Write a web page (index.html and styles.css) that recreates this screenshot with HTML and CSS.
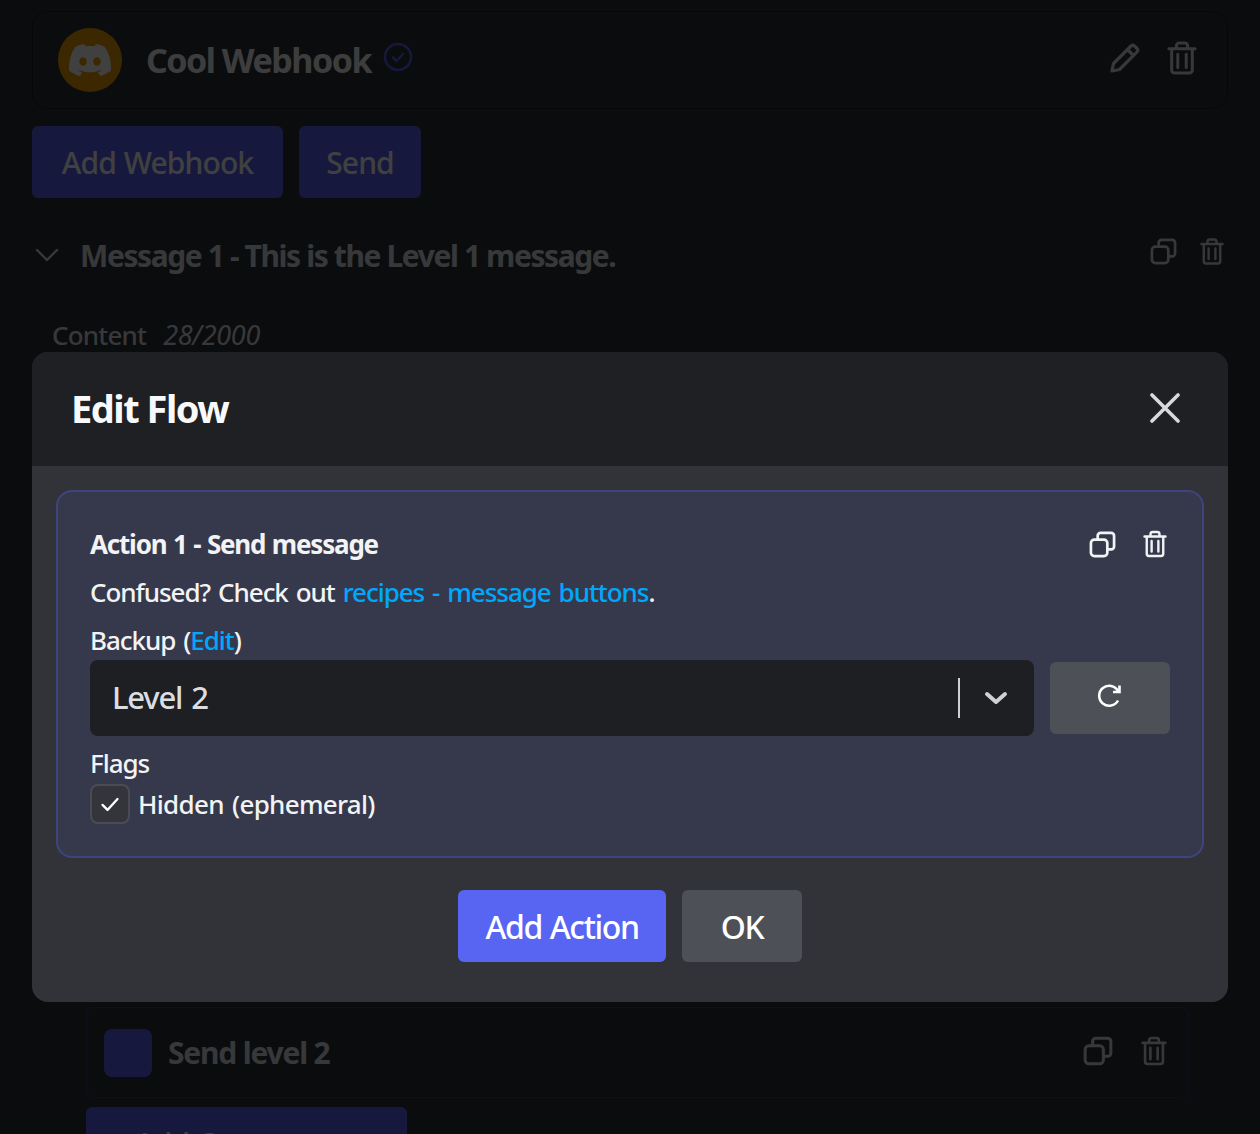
FILE: index.html
```html
<!DOCTYPE html>
<html lang="en">
<head>
<meta charset="UTF-8">
<title>Edit Flow</title>
<link rel="stylesheet" href="styles.css">
</head>
<body>
<svg class="defs" width="0" height="0">
    <symbol id="i-trash" viewBox="0 0 32 36">
        <path d="M2 8h28M10 8V5a3 3 0 0 1 3-3h6a3 3 0 0 1 3 3v3M5 8v23a3 3 0 0 0 3 3h16a3 3 0 0 0 3-3V8M11.500 14v14M20.500 14v14" fill="none" stroke="currentColor" stroke-width="3.200" stroke-linecap="round" stroke-linejoin="round"/>
    </symbol>
    <symbol id="i-copy" viewBox="0 0 28 28">
        <path d="M9 9V5a3 3 0 0 1 3-3h11a3 3 0 0 1 3 3v11a3 3 0 0 1-3 3h-4" fill="none" stroke="currentColor" stroke-width="2.800" stroke-linecap="round"/>
        <rect x="2" y="9" width="17" height="17" rx="3.500" fill="none" stroke="currentColor" stroke-width="2.800"/>
    </symbol>
</svg>

<div class="page">
    <div class="webhook-card">
        <div class="avatar">
            <svg width="42" height="42" viewBox="0 0 24 24"><path fill="#fff" d="M20.317 4.3698a19.7913 19.7913 0 00-4.8851-1.5152.0741.0741 0 00-.0785.0371c-.211.3753-.4447.8648-.6083 1.2495-1.8447-.2762-3.68-.2762-5.4868 0-.1636-.3933-.4058-.8742-.6177-1.2495a.077.077 0 00-.0785-.037 19.7363 19.7363 0 00-4.8852 1.515.0699.0699 0 00-.0321.0277C.5334 9.0458-.319 13.5799.0992 18.0578a.0824.0824 0 00.0312.0561c2.0528 1.5076 4.0413 2.4228 5.9929 3.0294a.0777.0777 0 00.0842-.0276c.4616-.6304.8731-1.2952 1.226-1.9942a.076.076 0 00-.0416-.1057c-.6528-.2476-1.2743-.5495-1.8722-.8923a.077.077 0 01-.0076-.1277c.1258-.0943.2517-.1923.3718-.2914a.0743.0743 0 01.0776-.0105c3.9278 1.7933 8.18 1.7933 12.0614 0a.0739.0739 0 01.0785.0095c.1202.099.246.1981.3728.2924a.077.077 0 01-.0066.1276 12.2986 12.2986 0 01-1.873.8914.0766.0766 0 00-.0407.1067c.3604.698.7719 1.3628 1.225 1.9932a.076.076 0 00.0842.0286c1.961-.6067 3.9495-1.5219 6.0023-3.0294a.077.077 0 00.0313-.0552c.5004-5.177-.8382-9.6739-3.5485-13.6604a.061.061 0 00-.0312-.0286zM8.02 15.3312c-1.1825 0-2.1569-1.0857-2.1569-2.419 0-1.3332.9555-2.4189 2.157-2.4189 1.2108 0 2.1757 1.0952 2.1568 2.419 0 1.3332-.9555 2.4189-2.1569 2.4189zm7.9748 0c-1.1825 0-2.1569-1.0857-2.1569-2.419 0-1.3332.9554-2.4189 2.1569-2.4189 1.2108 0 2.1757 1.0952 2.1568 2.419 0 1.3332-.946 2.4189-2.1568 2.4189Z"/></svg>
        </div>
        <span class="webhook-name">Cool Webhook</span>
        <svg class="verified" width="30" height="30" viewBox="0 0 30 30"><circle cx="15" cy="15" r="13" fill="none" stroke="#5865f2" stroke-width="2.500"/><path d="M10 15.500l3.500 3.500 6.500-7" fill="none" stroke="#5865f2" stroke-width="2.500" stroke-linecap="round" stroke-linejoin="round"/></svg>
        <div class="row-icons wide head-icons">
            <svg width="32" height="32" viewBox="0 0 32 32"><path d="M3 29l1.500-7.500L22 4a2.500 2.500 0 0 1 3.500 0L28 6.500a2.500 2.500 0 0 1 0 3.500L10.500 27.500zM18.500 7.500l6 6" fill="none" stroke="currentColor" stroke-width="3.200" stroke-linejoin="round"/></svg>
            <svg width="30" height="34"><use href="#i-trash"/></svg>
        </div>
    </div>

    <div class="button-row">
        <button class="btn primary btn-add">Add Webhook</button>
        <button class="btn primary btn-send">Send</button>
    </div>

    <div class="message-head">
        <svg width="24" height="14" viewBox="0 0 24 14"><path d="M2 2l10 10L22 2" fill="none" stroke="currentColor" stroke-width="2.400" stroke-linecap="round" stroke-linejoin="round"/></svg>
        <span class="message-title">Message 1 - This is the Level 1 message.</span>
        <div class="row-icons message-icons">
            <svg width="27" height="27"><use href="#i-copy"/></svg>
            <svg width="24" height="27"><use href="#i-trash"/></svg>
        </div>
    </div>

    <div class="message-body">
        <div class="field-label">Content <em>28/2000</em></div>
        <div class="nested">
            <div class="component">
                <span class="swatch"></span>
                <span class="component-name">Send level 2</span>
                <div class="row-icons wide component-icons">
                    <svg width="30" height="30"><use href="#i-copy"/></svg>
                    <svg width="26" height="30"><use href="#i-trash"/></svg>
                </div>
            </div>
            <button class="btn primary add-component">Add Component</button>
        </div>
    </div>
</div>

<div class="overlay">
    <div class="modal">
        <div class="modal-head">
            <h1>Edit Flow</h1>
            <svg width="30" height="30" viewBox="0 0 30 30"><path d="M2 2l26 26M28 2L2 28" fill="none" stroke="#d8d9db" stroke-width="3.600" stroke-linecap="round"/></svg>
        </div>
        <div class="modal-body">
            <div class="action-card">
                <div class="action-head">
                    <strong>Action 1 - Send message</strong>
                    <div class="row-icons action-icons">
                        <svg width="27" height="27"><use href="#i-copy"/></svg>
                        <svg width="24" height="28"><use href="#i-trash"/></svg>
                    </div>
                </div>
                <p>Confused? Check out <a href="#">recipes - message buttons</a>.</p>
                <p>Backup (<a href="#">Edit</a>)</p>
                <div class="select-row">
                    <div class="select">
                        <span class="select-value">Level 2</span>
                        <span class="select-sep"></span>
                        <svg width="24" height="14" viewBox="0 0 24 14"><path d="M3 3l9 8 9-8" fill="none" stroke="#cfd0d2" stroke-width="4" stroke-linecap="round" stroke-linejoin="round"/></svg>
                    </div>
                    <button class="btn secondary refresh">
                        <svg width="26" height="26" viewBox="0 0 26 26"><path d="M21 16.500A10 10 0 1 1 21 7M22.500 1.500V8H16" fill="none" stroke="#fff" stroke-width="2.600"/></svg>
                    </button>
                </div>
                <p class="flags-label">Flags</p>
                <label class="check-row">
                    <span class="checkbox">
                        <svg width="20" height="15" viewBox="0 0 22 18"><path d="M2 9.500l6 6L20 2.500" fill="none" stroke="#fff" stroke-width="2.800" stroke-linecap="round" stroke-linejoin="round"/></svg>
                    </span>
                    <span class="check-text">Hidden (ephemeral)</span>
                </label>
            </div>
            <div class="modal-actions">
                <button class="btn primary btn-action">Add Action</button>
                <button class="btn secondary ok">OK</button>
            </div>
        </div>
    </div>
</div>
</body>
</html>
```

FILE: styles.css
```css
* {
    box-sizing: border-box;
}

html, body {
    height: 1134px;
    overflow: hidden;
}

body {
    margin: 0;
    font-family: "Noto Sans", sans-serif;
    background-color: #2e3138;
    color: #dbdee1;
    position: relative;
}

.defs {
    position: absolute;
}

.page {
    padding: 11px 32px 0;
}

.webhook-card {
    display: flex;
    align-items: center;
    height: 98px;
    padding: 0 30px 0 25px;
    border: 1px solid #1e1f22;
    border-radius: 16px;
}

.avatar {
    width: 64px;
    height: 64px;
    border-radius: 50%;
    background-color: #f0a000;
    color: #fff;
    display: flex;
    align-items: center;
    justify-content: center;
}

.webhook-name {
    margin-left: 24px;
    font-size: 34px;
    font-weight: 700;
    letter-spacing: -1.5px;
    color: #f2f3f5;
}

.verified {
    margin: 0 0 6px 12px;
}

.row-icons {
    margin-left: auto;
    display: flex;
    align-items: center;
    gap: 24px;
}

.row-icons.wide {
    gap: 26px;
}

.head-icons {
    margin-bottom: 4px;
}

.message-icons {
    margin: 0 2px 8px auto;
    gap: 23px;
}

.row-icons.component-icons {
    margin-bottom: 4px;
    margin-right: 1px;
    gap: 28px;
}

.btn {
    font-family: inherit;
    font-size: 30px;
    font-weight: 500;
    height: 72px;
    border: none;
    border-radius: 6px;
    color: #fff;
    padding: 0;
    letter-spacing: -0.9px;
    word-spacing: 1px;
}

.primary {
    background-color: #5865f2;
}

.secondary {
    background-color: #4e5058;
}

.button-row {
    display: flex;
    gap: 16px;
    margin-top: 17px;
}

.btn-add {
    width: 251px;
}

.btn-send {
    width: 122px;
}

.message-head {
    display: flex;
    align-items: center;
    height: 48px;
    margin-top: 33px;
    padding: 0 2px 0 3px;
}

.message-title {
    margin-left: 21px;
    font-size: 30px;
    font-weight: 700;
    letter-spacing: -1.4px;
    color: #dbdee1;
}

.message-body {
    margin: 16px -8px 0;
    padding: 20px 27px 0;
    height: 900px;
    border: 1px solid #2f3136;
    border-bottom: 0;
    border-radius: 8px 8px 0 0;
}

.field-label {
    font-size: 26px;
    font-weight: 500;
    letter-spacing: -0.8px;
}

.field-label em {
    margin-left: 11px;
    font-size: 27px;
    letter-spacing: -0.3px;
    font-weight: 400;
}

.nested {
    margin: 654px 0 0 34px;
}

.component {
    display: flex;
    align-items: center;
    width: 1103px;
    height: 91px;
    padding: 0 20px 0 17px;
    border: 1px solid #3a3e70;
    border-radius: 8px;
}

.swatch {
    width: 48px;
    height: 48px;
    border-radius: 8px;
    background-color: #5865f2;
}

.component-name {
    margin-left: 16px;
    font-size: 30px;
    font-weight: 700;
    letter-spacing: -1.2px;
}

.add-component {
    display: block;
    width: 321px;
    margin-top: 9px;
}

.overlay {
    position: absolute;
    top: 0;
    left: 0;
    width: 1260px;
    height: 1134px;
    padding: 352px 32px 0;
    background-color: rgba(0, 0, 0, 0.75);
}

.modal {
    height: 650px;
    border-radius: 16px;
    background-color: #313338;
    overflow: hidden;
    color: #f2f3f5;
}

.modal-head {
    display: flex;
    align-items: center;
    justify-content: space-between;
    height: 114px;
    padding: 0 48px 2px 39px;
    background-color: #1f2024;
}

h1 {
    margin: 0;
    font-size: 38px;
    font-weight: 700;
    letter-spacing: -1.5px;
    color: #f8f9fa;
}

.modal-body {
    padding: 24px;
}

.action-card {
    height: 368px;
    padding: 28px 32px 0;
    background-color: #36394c;
    border: 2px solid #3f4480;
    border-radius: 16px;
    font-size: 26px;
    font-weight: 500;
    letter-spacing: -1.05px;
    word-spacing: 2.2px;
    line-height: 48px;
}

.action-head {
    display: flex;
    align-items: center;
}

.action-head strong {
    letter-spacing: -1.2px;
    word-spacing: 1px;
}

.action-icons {
    gap: 27px;
    margin-right: 3px;
}

.action-card p {
    margin: 0;
}

.action-card a {
    color: #00a8fc;
    text-decoration: none;
}

.select-row {
    display: flex;
    align-items: center;
    gap: 16px;
    margin-top: -4px;
}

.select {
    flex: 1;
    display: flex;
    align-items: center;
    height: 76px;
    padding: 0 26px 0 22px;
    background-color: #1e1f22;
    border-radius: 8px;
}

.select-value {
    flex: 1;
    font-size: 31px;
    letter-spacing: -1.2px;
    color: #dbdee1;
    padding-bottom: 2px;
}

.select-sep {
    width: 2px;
    height: 40px;
    margin-right: 24px;
    background-color: #cfd0d2;
}

.refresh {
    width: 120px;
}

.action-card .flags-label {
    line-height: 41px;
    margin-top: 7px;
}

.check-row {
    display: flex;
    align-items: center;
    gap: 8px;
    height: 40px;
}

.check-text {
    letter-spacing: -0.7px;
}

.checkbox {
    width: 40px;
    height: 40px;
    display: flex;
    align-items: center;
    justify-content: center;
    background-color: #33353a;
    border: 2px solid #4a4c54;
    border-radius: 8px;
}

.modal-actions {
    display: flex;
    justify-content: center;
    gap: 16px;
    margin-top: 32px;
}

.modal-actions .btn {
    font-size: 32px;
    letter-spacing: -1.4px;
    word-spacing: 1px;
}

.btn-action {
    width: 208px;
}

.ok {
    width: 120px;
}
```
